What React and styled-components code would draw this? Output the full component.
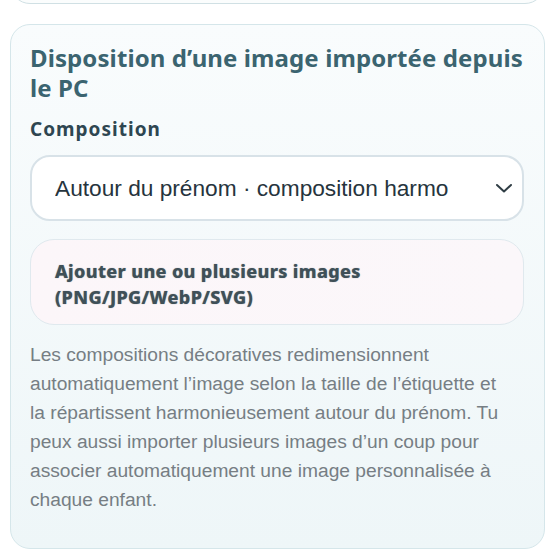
import React from "react";
import styled, { createGlobalStyle } from "styled-components";

const Global = createGlobalStyle`
  html, body {
    margin: 0;
    padding: 0;
    background: #ffffff;
  }
  body {
    font-family: "Liberation Sans", Arial, sans-serif;
    overflow: hidden;
  }
`;

const Page = styled.div`
  display: flex;
  flex-direction: column;
  gap: 20px;
  padding: 0 10px;
`;

const Card = styled.section`
  border: 1px solid #d5e6ea;
  border-radius: 20px;
  background: linear-gradient(180deg, #f9fcfd 0%, #eef6f8 100%);
  padding: 18px 20px 34px 19px;
  box-sizing: border-box;
`;

const PrevCard = styled(Card)`
  height: 40px;
  margin-top: -36px;
  padding: 0;
  background: #fbfdfd;
  border-color: #d0e0e4;
  border-width: 1.5px;
`;

const Title = styled.h2`
  margin: 0 0 14px;
  font-family: "Noto Sans", sans-serif;
  font-weight: 700;
  font-size: 24px;
  line-height: 30px;
  letter-spacing: 0.1px;
  color: #3b6470;
`;

const Label = styled.div`
  font-family: "Noto Sans", sans-serif;
  font-weight: 700;
  font-size: 19px;
  line-height: 24px;
  letter-spacing: 1px;
  color: #2e4651;
  margin-bottom: 14px;
`;

const SelectBox = styled.div`
  display: flex;
  align-items: center;
  justify-content: space-between;
  height: 66px;
  box-sizing: border-box;
  border: 2px solid #d8e2e8;
  border-radius: 20px;
  background: #ffffff;
  padding: 0 6px 0 23px;
  margin-bottom: 18px;
`;

const SelectText = styled.span`
  font-size: 22.7px;
  color: #26343d;
  white-space: nowrap;
  overflow: hidden;
  width: 394px;
`;

const Upload = styled.div`
  box-sizing: border-box;
  height: 86px;
  border: 1px solid #e0e9ee;
  border-radius: 24px;
  background: linear-gradient(90deg, #fcf6f9 0%, #fbf7fa 100%);
  padding: 18px 24px 0;
  margin-bottom: 15px;
`;

const UploadText = styled.div`
  font-family: "Noto Sans", sans-serif;
  font-weight: 800;
  font-size: 18px;
  line-height: 26px;
  letter-spacing: 0.35px;
  color: #3f5058;
  text-shadow: 0 0 1px rgba(63, 80, 88, 0.6);
`;

const Help = styled.p`
  margin: 0;
  max-width: 486px;
  font-size: 19.2px;
  line-height: 29px;
  color: #767e84;
`;

const Chevron = () => (
  <svg width="24" height="20" viewBox="0 0 24 20" fill="none">
    <path d="M5 7l7 6.5 7-6.5" stroke="#2f3d44" strokeWidth="2" strokeLinecap="round" strokeLinejoin="round" />
  </svg>
);

export default function App() {
  return (
    <>
      <Global />
      <Page>
        <PrevCard />
        <Card>
          <Title>Disposition d’une image importée depuis le PC</Title>
          <Label>Composition</Label>
          <SelectBox>
            <SelectText>Autour du prénom · composition harmonieuse</SelectText>
            <Chevron />
          </SelectBox>
          <Upload>
            <UploadText>
              Ajouter une ou plusieurs images
              <br />
              (PNG/JPG/WebP/SVG)
            </UploadText>
          </Upload>
          <Help>
            Les compositions décoratives redimensionnent automatiquement l’image selon la taille de l’étiquette et la
            répartissent harmonieusement autour du prénom. Tu peux aussi importer plusieurs images d’un coup pour
            associer automatiquement une image personnalisée à chaque enfant.
          </Help>
        </Card>
      </Page>
    </>
  );
}
